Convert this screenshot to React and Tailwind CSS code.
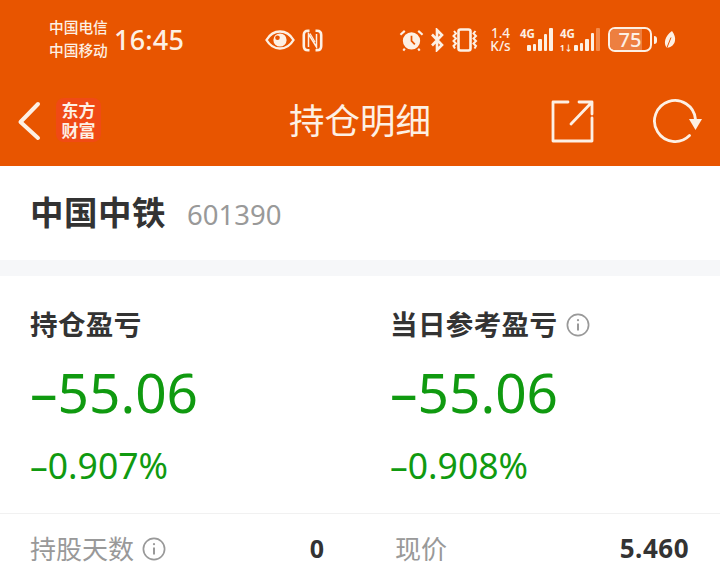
import React from "react";

const cjk = { fontFamily: '"Noto Sans", "Noto Sans CJK SC", sans-serif' };

function InfoIcon({ className }) {
  return (
    <svg viewBox="0 0 24 24" className={className} fill="none" stroke="#999" strokeWidth="1.7">
      <circle cx="12" cy="12" r="10.6" />
      <path d="M12 10.5v7" strokeWidth="2" />
      <circle cx="12" cy="7.2" r="1.1" fill="#999" stroke="none" />
    </svg>
  );
}

function Bars({ heights, dim }) {
  return (
    <div className="flex items-end gap-[2px] h-[23px]">
      {heights.map((h, i) => (
        <div
          key={i}
          className={`w-[3.6px] rounded-[1px] ${dim && i === heights.length - 1 ? "bg-[#f58a4a]" : "bg-[#fdf0e4]"}`}
          style={{ height: h }}
        />
      ))}
    </div>
  );
}

function StatusBar() {
  return (
    <div className="h-[78px] flex items-start pt-[16px] text-[#fdf0e4]">
      <div className="w-[49px] shrink-0" />
      <div className="flex flex-col text-[14.7px] leading-[23px] w-[65px] shrink-0 font-medium">
        <span>中国电信</span>
        <span>中国移动</span>
      </div>
      <div className="text-[27px] leading-[44px] w-[151px] shrink-0 font-medium tracking-[0.2px] mt-[2px]">16:45</div>

      {/* eye */}
      <svg viewBox="0 0 30 20" className="w-[30px] h-[20px] mt-[14px] shrink-0">
        <path d="M1.5 10C5 4 9.5 1.5 15 1.5S25 4 28.5 10C25 16 20.5 18.5 15 18.5S5 16 1.5 10Z" fill="none" stroke="#fdf0e4" strokeWidth="2.4" />
        <circle cx="15" cy="10" r="6.6" fill="#fdf0e4" />
        <circle cx="12.5" cy="7.8" r="2.3" fill="#e85500" />
      </svg>
      {/* nfc */}
      <svg viewBox="0 0 21 23" className="w-[21px] h-[23px] ml-[7px] mt-[13px] shrink-0" fill="none" stroke="#fdf0e4">
        <path d="M7.5 1.8H6Q1.8 1.8 1.8 6V17Q1.8 21.2 6 21.2H7.5M13.5 1.8H15Q19.2 1.8 19.2 6V17Q19.2 21.2 15 21.2H13.5" strokeWidth="2.6" />
        <path d="M6.5 18V5L14.5 18V5" strokeWidth="1.5" />
        <path d="M8 4.5L13 13" strokeWidth="1.3" />
      </svg>

      <div className="w-[76px] shrink-0" />

      {/* alarm */}
      <svg viewBox="0 0 26 24" className="w-[25px] h-[24px] mt-[12px] shrink-0">
        <circle cx="13" cy="13" r="9" fill="#fdf0e4" />
        <path d="M13 7.5V13L16.5 16.5" fill="none" stroke="#e85500" strokeWidth="1.8" />
        <path d="M1.5 6.5L6 2.5M24.5 6.5L20 2.5M6 21L4.5 23M20 21L21.5 23" stroke="#fdf0e4" strokeWidth="2.2" fill="none" />
      </svg>
      {/* bluetooth */}
      <svg viewBox="0 0 14 24" className="w-[14px] h-[24px] ml-[6px] mt-[12px] shrink-0" fill="none" stroke="#fdf0e4" strokeWidth="2.6">
        <path d="M2 6.5L12 17L7 22V2L12 7L2 17.5" />
      </svg>
      {/* vibrate */}
      <svg viewBox="0 0 28 24" className="w-[28px] h-[24px] ml-[7px] mt-[12px] shrink-0" fill="none" stroke="#fdf0e4" strokeWidth="2">
        <rect x="7.5" y="1.5" width="12" height="21" rx="2" strokeWidth="2.6" />
        <path d="M3 3l2 2.5-2.5 2.5 2.5 2.5-2.5 2.5 2.5 2.5-2.5 2.5 1.5 2.5M24.5 3l-2 2.5 2.5 2.5-2.5 2.5 2.5 2.5-2.5 2.5 2.500 2.500-1.500 2.500" />
      </svg>

      <div className="flex flex-col items-center text-[13.5px] leading-[13px] ml-[10px] mt-[11px] w-[23px] shrink-0 font-medium">
        <span>1.4</span>
        <span>K/s</span>
      </div>

      <div className="relative w-[33px] h-[23px] ml-[8px] mt-[12px] shrink-0 flex justify-end">
        <span className="absolute left-0 top-[-1px] text-[11.5px] leading-[14px] font-bold">4G</span>
        <Bars heights={[6, 7, 12, 17, 23]} />
      </div>

      <div className="relative w-[40px] h-[23px] ml-[7px] mt-[12px] shrink-0 flex justify-end">
        <span className="absolute left-0 top-[-1px] text-[11.5px] leading-[14px] font-bold">4G</span>
        <span className="absolute left-0 bottom-[-1px] text-[8px] leading-[9px] font-bold">1↓</span>
        <Bars heights={[6, 8, 12, 18, 23]} dim />
      </div>

      {/* battery */}
      <div className="relative w-[44px] h-[25px] ml-[8px] mt-[11px] shrink-0 rounded-[7px] border-2 border-[#fdf0e4] overflow-hidden flex items-center justify-center">
        <div className="absolute left-0 top-0 bottom-0 w-[32px] bg-[#ed7f40]" />
        <span className="relative text-[20px] leading-[21px] font-medium">75</span>
      </div>
      <div className="w-[2.5px] h-[8px] bg-[#fdf0e4] rounded-r-sm ml-[2px] mt-[20px] shrink-0" />
      {/* leaf */}
      <svg viewBox="0 0 13 18" className="w-[13px] h-[19px] ml-[6px] mt-[14px] shrink-0">
        <path d="M9 0.5C11.5 4 12.5 7 12 10C11.5 14 8 17.5 3.5 17C0.5 13 1.5 6 9 0.5Z" fill="#fdf0e4" />
        <path d="M4 17L8 7" stroke="#e85500" strokeWidth="1" />
      </svg>
    </div>
  );
}

function NavBar() {
  return (
    <div className="h-[88px] grid grid-cols-[1fr_auto_1fr] items-center text-[#fdf0e4]">
      <div className="flex items-center">
        <svg viewBox="0 0 26 40" className="w-[26px] h-[40px] ml-[17px] mb-[2px] shrink-0" fill="none" stroke="#fdf0e4" strokeWidth="4" strokeLinecap="round" strokeLinejoin="round">
          <path d="M21 3L3.5 21L21 37" />
        </svg>
        <div className="ml-[13px] mb-[4px] w-[45px] h-[44px] rounded-[8px] bg-[#f04a15] flex flex-col items-center justify-center text-[17px] leading-[20px] font-bold shrink-0" style={{ fontFamily: '"Noto Sans CJK SC", sans-serif' }}>
          <span>东方</span>
          <span>财富</span>
        </div>
      </div>
      <div className="text-[35.5px] leading-none mb-[3px]">持仓明细</div>
      <div className="flex items-center justify-end">
        <svg viewBox="0 0 44 44" className="w-[44px] h-[44px] mb-[3px] shrink-0" fill="none" stroke="#fdf0e4" strokeWidth="2.8" strokeLinecap="round" strokeLinejoin="round">
          <path d="M17 3H2V42H41V19" />
          <path d="M20 25L41 3M28 3H41V15" />
        </svg>
        <svg viewBox="0 0 52 46" className="w-[52px] h-[46px] ml-[57px] mr-[16px] mb-[3px] shrink-0">
          <path d="M37.5 37.5A20.5 20.5 0 1 1 43.4 21" fill="none" stroke="#fdf0e4" strokeWidth="2.8" strokeLinecap="round" />
          <path d="M37 21H50L43.5 32Z" fill="#fdf0e4" />
        </svg>
      </div>
    </div>
  );
}

function Metric({ title, value, pct, info, className }) {
  return (
    <div className={className}>
      <div className="flex items-center h-[30px] text-[27.5px] leading-none font-bold text-[#333] tracking-[0.4px] mt-[-1px]">
        {title}
        {info && <InfoIcon className="w-[24px] h-[24px] ml-[9px]" />}
      </div>
      <div className="mt-[19px] text-[55px] leading-[66px] text-[#109a10]">{value}</div>
      <div className="mt-[19px] text-[35.5px] leading-[42px] text-[#109a10]">{pct}</div>
    </div>
  );
}

export default function App() {
  return (
    <div className="w-[720px] h-[573px] overflow-hidden bg-white" style={cjk}>
      <div className="bg-[#e85500]">
        <StatusBar />
        <NavBar />
      </div>

      {/* stock name */}
      <div className="h-[94px] flex items-baseline pl-[30px] pt-[25px]">
        <span className="text-[33.5px] leading-[42px] font-bold text-[#333] tracking-[0.5px]">中国中铁</span>
        <span className="ml-[21px] text-[27.5px] leading-[42px] text-[#999]">601390</span>
      </div>
      <div className="h-[16px] bg-[#f6f7f9]" />

      {/* profit */}
      <div className="flex pt-[35px] h-[238px] border-b border-[#f1f1f1]">
        <Metric className="w-[390px] pl-[30px]" title="持仓盈亏" value="–55.06" pct="–0.907%" />
        <Metric className="flex-1" title="当日参考盈亏" value="–55.06" pct="–0.908%" info />
      </div>

      {/* stats row */}
      <div className="flex items-center h-[70px] pb-[1px]">
        <div className="w-[395px] flex items-center pl-[30px] pr-[71px]">
          <span className="text-[#999] text-[26px] leading-none">持股天数</span>
          <InfoIcon className="w-[24px] h-[24px] ml-[8px]" />
          <span className="ml-auto font-bold text-[#333] text-[25px]">0</span>
        </div>
        <div className="flex-1 flex items-center pr-[31px]">
          <span className="text-[#999] text-[26px] leading-none">现价</span>
          <span className="ml-auto font-bold text-[#333] text-[26px] tracking-[0.5px]">5.460</span>
        </div>
      </div>
    </div>
  );
}
